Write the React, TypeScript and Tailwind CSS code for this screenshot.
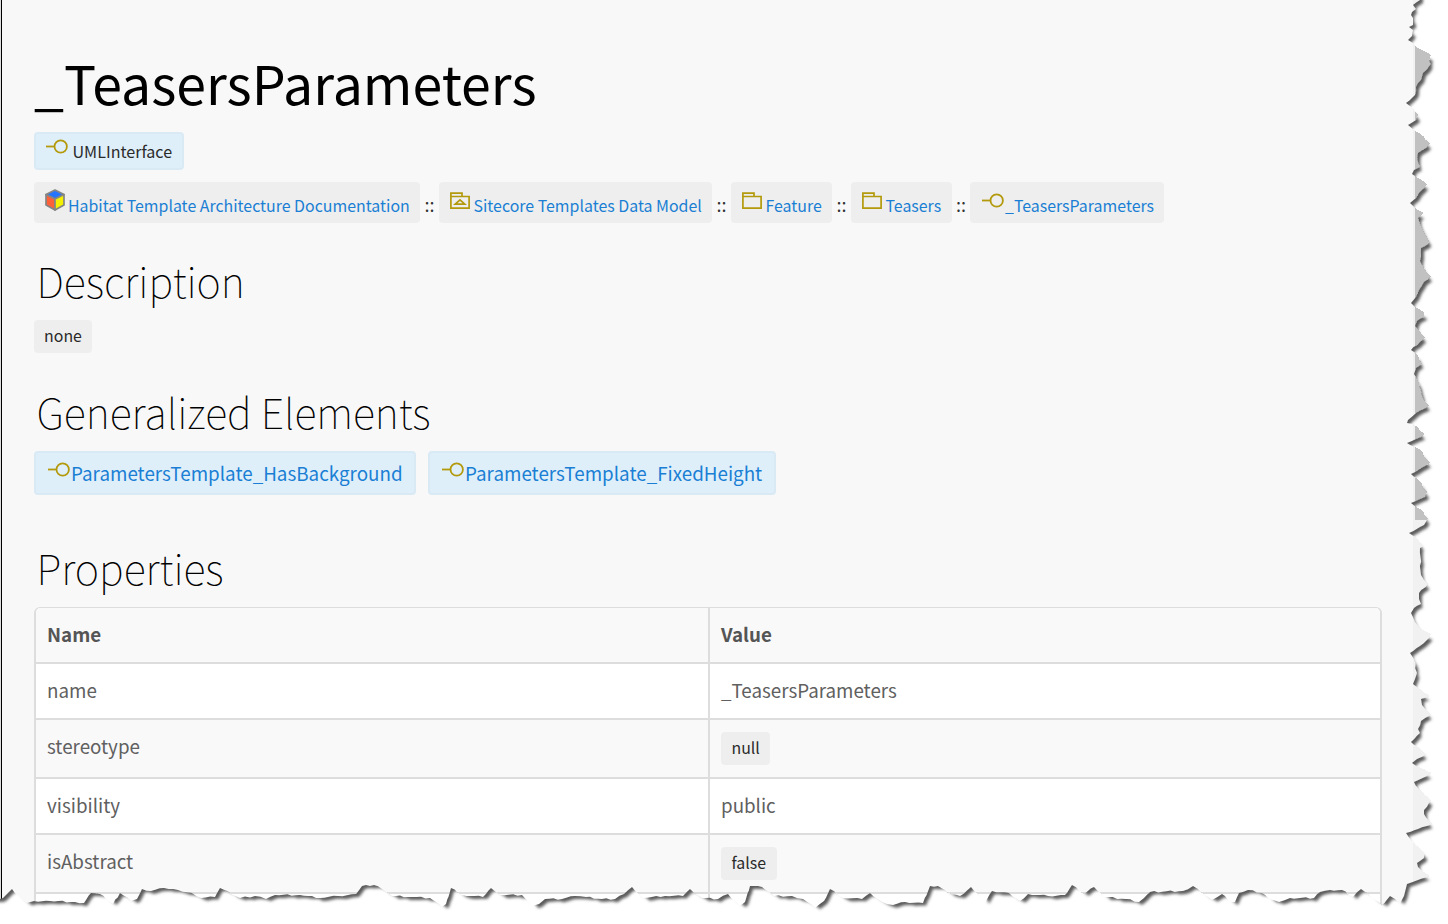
const edgeRight: number[][] = [
  [1420, 0], [1413, 5], [1416, 9], [1412, 12], [1411, 15], [1413, 18], [1413, 25], [1409, 27], [1413, 30], [1412, 36], [1408, 40], [1413, 43],
  [1415, 46], [1431, 55], [1429, 61], [1431, 64], [1423, 73], [1421, 80], [1416, 87], [1415, 95], [1406, 103],
  [1413, 108], [1418, 115], [1416, 120], [1408, 125], [1414, 130], [1419, 133], [1430, 143], [1426, 148], [1418, 153],
  [1418, 162], [1420, 167], [1414, 170], [1412, 174], [1418, 178], [1427, 184], [1423, 189], [1419, 193], [1416, 198],
  [1410, 203], [1416, 209], [1424, 213], [1418, 218], [1420, 224], [1423, 230], [1429, 241], [1428, 244], [1421, 248],
  [1420, 261], [1424, 268], [1431, 276], [1424, 282], [1419, 290], [1416, 297], [1411, 303], [1415, 307],
  [1424, 312], [1424, 317], [1417, 321], [1415, 326], [1419, 330], [1425, 338], [1420, 342], [1411, 350], [1417, 354],
  [1422, 364], [1416, 368], [1414, 374], [1419, 383], [1422, 396], [1429, 406], [1416, 413], [1408, 420], [1407, 423],
  [1413, 424], [1425, 434], [1421, 437], [1407, 443], [1419, 449], [1430, 463], [1425, 466], [1411, 474],
  [1418, 479], [1427, 492], [1425, 497], [1411, 503], [1420, 509], [1428, 518], [1424, 525], [1409, 533],
  [1415, 537], [1424, 546], [1420, 548], [1421, 575], [1428, 584], [1419, 593], [1419, 599], [1421, 604],
  [1414, 608], [1411, 613], [1415, 622], [1420, 628], [1431, 634], [1429, 638], [1420, 646], [1410, 653],
  [1414, 659], [1417, 673], [1413, 684], [1420, 689], [1430, 696], [1421, 699], [1422, 705], [1431, 715], [1421, 721],
  [1418, 729], [1420, 733], [1411, 742], [1418, 747], [1426, 755], [1417, 759], [1412, 763], [1421, 768], [1432, 773],
  [1425, 777], [1414, 782], [1419, 789], [1431, 800], [1424, 810], [1424, 814], [1432, 824], [1418, 829], [1406, 833],
  [1412, 841], [1424, 852], [1424, 858], [1417, 863], [1418, 867], [1430, 876], [1418, 880], [1407, 884],
];

const edgeBottom: number[][] = [
  [1404, 896], [1400, 904], [1395, 899], [1390, 896], [1382, 905], [1361, 889], [1353, 897], [1342, 890], [1330, 890], [1320, 892],
  [1314, 898], [1290, 898], [1279, 902], [1269, 899], [1262, 893], [1248, 890], [1239, 893], [1235, 902], [1231, 902], [1222, 894],
  [1212, 900], [1202, 893], [1193, 886], [1183, 891], [1150, 892], [1144, 898], [1139, 902], [1126, 899], [1104, 897], [1094, 887],
  [1084, 894], [1072, 885], [1065, 895], [1048, 896], [1028, 894], [1020, 901], [1009, 893], [992, 891], [985, 903], [971, 887],
  [960, 896], [948, 893], [938, 886], [930, 886], [923, 903], [905, 902], [893, 905], [882, 902], [870, 893], [862, 899], [843, 898],
  [830, 889], [824, 901], [815, 908], [803, 899], [792, 896], [774, 896], [762, 887], [750, 886], [745, 902], [740, 906], [728, 894],
  [718, 899], [702, 898], [690, 889], [683, 896], [665, 896], [643, 898], [632, 887], [624, 894], [615, 899], [602, 899], [586, 897],
  [575, 896], [562, 899], [545, 899], [539, 904], [532, 906], [522, 895], [500, 895], [491, 888], [483, 897], [462, 895],
  [451, 888], [446, 904], [442, 907], [430, 898], [412, 897], [392, 896], [382, 889], [374, 885], [362, 886], [356, 894],
  [338, 896], [320, 898], [300, 895], [275, 895], [266, 899], [255, 896], [240, 898], [220, 888], [215, 897], [201, 898],
  [192, 893], [178, 890], [164, 888], [151, 891], [142, 889], [137, 899], [131, 901], [120, 893], [113, 904], [100, 894],
  [91, 893], [84, 903], [75, 902], [50, 901], [34, 901], [27, 903], [20, 898], [12, 889], [7, 894], [3, 898], [0, 899],
];

// Adds small ragged steps between the main points of the torn edge.
function roughen(points: number[][], vertical: boolean) {
  const out: string[] = [];
  points.forEach(([x, y], i) => {
    out.push(`${x} ${y}`);
    const next = points[i + 1];
    if (!next) return;
    const length = Math.hypot(next[0] - x, next[1] - y);
    const steps = Math.floor(length / 4);
    for (let k = 1; k < steps; k++) {
      const t = k / steps;
      const jag = ((i * 7 + k * 5) % 4) * 0.5 - 0.8;
      const px = x + (next[0] - x) * t + (vertical ? jag : 0);
      const py = y + (next[1] - y) * t + (vertical ? 0 : jag);
      out.push(`${px.toFixed(1)} ${py.toFixed(1)}`);
    }
  });
  return out.join(" L");
}

const edge = `${roughen(edgeRight, true)} L${roughen(edgeBottom, false)}`;
const page = `M-20 -20 L1420 -20 L${edge} L-20 899 Z`;
const outside = `M1460 -20 L1420 -20 L${edge} L0 940 L1460 940 Z`;

function TornEdge() {
  return (
    <svg className="pointer-events-none absolute inset-0" width="1448" height="924" viewBox="0 0 1448 924">
      <defs>
        <clipPath id="outside">
          <path d={outside} />
        </clipPath>
        <filter id="soft" x="-5%" y="-5%" width="110%" height="110%">
          <feMorphology operator="erode" radius="2" />
          <feGaussianBlur stdDeviation="1.8" />
        </filter>
      </defs>
      <path d={outside} fill="#fff" shapeRendering="crispEdges" />
      <g clipPath="url(#outside)">
        <path d={page} fill="#5c5c5c" filter="url(#soft)" transform="translate(5 5)" />
      </g>
    </svg>
  );
}

function InterfaceIcon() {
  return (
    <svg className="shrink-0" width="22" height="16" viewBox="0 0 22 16" fill="none" stroke="#b39a0c" strokeWidth="1.8">
      <path d="M0 7.5H8" />
      <circle cx="14.7" cy="7.5" r="6.2" />
    </svg>
  );
}

function FolderIcon({ model = false }: { model?: boolean }) {
  return (
    <svg className="shrink-0" width="20" height="18" viewBox="0 0 20 18" fill="none" stroke="#b39a0c" strokeWidth="1.7">
      <path d="M.9 4.5H19.1V16.1H.9ZM.9 4.5V1.1H12V4.5" />
      {model && <path d="M5.2 12.2L10 7.8L14.8 12.2Z" />}
    </svg>
  );
}

function CubeIcon() {
  return (
    <svg className="shrink-0" width="20" height="22" viewBox="0 0 20 22" stroke="#858585" strokeWidth="1.7" strokeLinejoin="round">
      <path d="M10 1L19 5.5L10 10L1 5.5Z" fill="#2574ff" />
      <path d="M1 5.5L10 10V21L1 16Z" fill="#ff6038" />
      <path d="M19 5.5L10 10V21L19 16Z" fill="#f4f000" />
    </svg>
  );
}

const chip = "flex shrink-0 items-start rounded bg-[#eeeeee] whitespace-nowrap";
const crumb = `${chip} h-[41px] text-[15.92px] leading-[48px] text-[#1a7fd4]`;
const blue = "flex shrink-0 items-start rounded border-2 border-[#d9eaf5] bg-[#dfeffa] whitespace-nowrap";
const heading = "ml-[2.5px] text-[41.4px] leading-[52px] font-thin text-black";

function Separator({ className = "w-[19px]" }: { className?: string }) {
  return <span className={`${className} shrink-0 text-center text-[18px] leading-[44px] text-[#333]`}>::</span>;
}

function Row({ name, value, code, tone, height }: { name: string; value: string; code?: boolean; tone: string; height: string }) {
  return (
    <div className={`grid shrink-0 grid-cols-[674px_1fr] border-b-2 border-[#dddddd] ${tone} ${height}`}>
      <div className={`flex items-center border-r-2 border-[#dddddd] pl-[11px] ${code ? "pb-[5px]" : "pb-[2px]"}`}>{name}</div>
      <div className={`flex items-center pl-[11px] ${code ? "" : "pb-[2px]"}`}>
        {code ? <span className="h-[33px] rounded bg-[#eeeeee] px-[10.5px] text-[15.9px] leading-[31px] text-[#2a2a2a]">{value}</span> : value}
      </div>
    </div>
  );
}

export default function App() {
  return (
    <div className="relative h-[924px] w-[1448px] overflow-hidden bg-white font-['Noto_Sans_CJK_SC',sans-serif]">
      <div className="flex h-full w-full">
        <div className="h-[899px] w-[2px] shrink-0 border-r border-black bg-[#dddddd]" />
        <main className="flex w-[1411px] shrink-0 flex-col bg-[#f8f8f8] pl-8">
          <h1 className="mt-[44px] text-[53.65px] leading-[76px] text-black">_TeasersParameters</h1>
          <div className={`${blue} mt-3 h-[38px] w-[150px] pl-[10px] text-[16.1px] leading-[35px] text-[#2a2a2a]`}>
            <div className="mt-[5px] mr-[4.5px]"><InterfaceIcon /></div>
            UMLInterface
          </div>
          <nav className="mt-3 flex h-[41px]">
            <div className={`${crumb} w-[386px] pl-[11px]`}>
              <div className="mt-[7px] mr-[3px]"><CubeIcon /></div>Habitat Template Architecture Documentation
            </div>
            <Separator />
            <div className={`${crumb} w-[273px] pl-[11px]`}>
              <div className="mt-[10px] mr-[3.5px]"><FolderIcon model /></div>Sitecore Templates Data Model
            </div>
            <Separator />
            <div className={`${crumb} w-[101px] pl-[11px]`}>
              <div className="mt-[10px] mr-[3.5px]"><FolderIcon /></div>Feature
            </div>
            <Separator />
            <div className={`${crumb} w-[101px] pl-[11px]`}>
              <div className="mt-[10px] mr-[3.5px]"><FolderIcon /></div>Teasers
            </div>
            <Separator className="w-[18px]" />
            <div className={`${crumb} w-[194px] pl-3`}>
              <div className="mt-[11px] mr-px"><InterfaceIcon /></div>_TeasersParameters
            </div>
          </nav>
          <h2 className={`${heading} mt-[31px]`}>Description</h2>
          <div className={`${chip} mt-[14px] h-[33px] w-[58px] justify-center text-[15.9px] leading-[31px] text-[#2a2a2a]`}>none</div>
          <h2 className={`${heading} mt-[32px]`}>Generalized Elements</h2>
          <div className="mt-[14px] flex gap-3 text-[18.82px] leading-[40px] text-[#1a7fd4]">
            <div className={`${blue} h-[44px] w-[382px] pl-3`}>
              <div className="mt-[9px] mr-px"><InterfaceIcon /></div>ParametersTemplate_HasBackground
            </div>
            <div className={`${blue} h-[44px] w-[348px] pl-3`}>
              <div className="mt-[9px] mr-px"><InterfaceIcon /></div>ParametersTemplate_FixedHeight
            </div>
          </div>
          <h2 className={`${heading} mt-[46px]`}>Properties</h2>
          <div className="mt-[14px] flex w-[1348px] shrink-0 flex-col overflow-hidden rounded-t-md border-x-2 border-t border-[#dddddd] text-[18.78px] text-[#606060]">
            <Row name="Name" value="Value" tone="bg-[#f9f9f9] font-bold text-[#555]" height="h-[56px]" />
            <Row name="name" value="_TeasersParameters" tone="bg-white" height="h-[56px]" />
            <Row name="stereotype" value="null" code tone="bg-[#f9f9f9]" height="h-[59px]" />
            <Row name="visibility" value="public" tone="bg-white" height="h-[56px]" />
            <Row name="isAbstract" value="false" code tone="bg-[#f9f9f9]" height="h-[59px]" />
            <Row name="" value="" tone="bg-white" height="h-[56px]" />
          </div>
        </main>
        <div className="h-full w-[2px] shrink-0 bg-[#f1f1f1]" />
        <div className="h-full w-[33px] shrink-0 bg-[#f1f1f1] pt-[17px]">
          <div className="h-[503px] bg-[#c1c1c1]" />
        </div>
      </div>
      <TornEdge />
    </div>
  );
}
